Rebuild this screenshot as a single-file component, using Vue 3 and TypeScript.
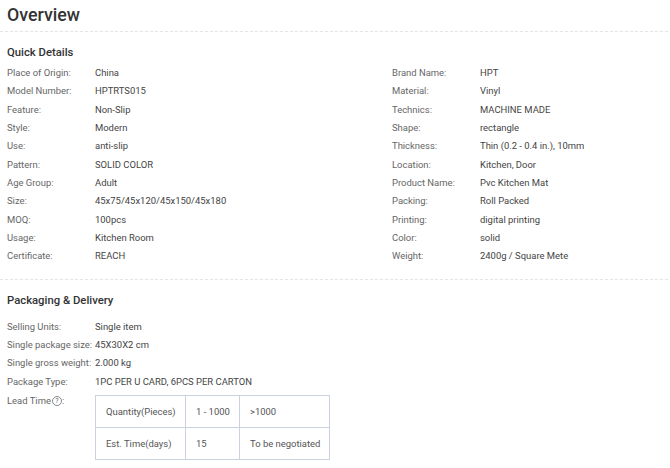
<script setup lang="ts">
const left: [string, string][] = [
  ['Place of Origin:', 'China'],
  ['Model Number:', 'HPTRTS015'],
  ['Feature:', 'Non-Slip'],
  ['Style:', 'Modern'],
  ['Use:', 'anti-slip'],
  ['Pattern:', 'SOLID COLOR'],
  ['Age Group:', 'Adult'],
  ['Size:', '45x75/45x120/45x150/45x180'],
  ['MOQ:', '100pcs'],
  ['Usage:', 'Kitchen Room'],
  ['Certificate:', 'REACH'],
]
const right: [string, string][] = [
  ['Brand Name:', 'HPT'],
  ['Material:', 'Vinyl'],
  ['Technics:', 'MACHINE MADE'],
  ['Shape:', 'rectangle'],
  ['Thickness:', 'Thin (0.2 - 0.4 in.), 10mm'],
  ['Location:', 'Kitchen, Door'],
  ['Product Name:', 'Pvc Kitchen Mat'],
  ['Packing:', 'Roll Packed'],
  ['Printing:', 'digital printing'],
  ['Color:', 'solid'],
  ['Weight:', '2400g / Square Mete'],
]
const packaging: [string, string][] = [
  ['Selling Units:', 'Single item'],
  ['Single package size:', '45X30X2 cm'],
  ['Single gross weight:', '2.000 kg'],
  ['Package Type:', '1PC PER U CARD, 6PCS PER CARTON'],
]
</script>

<template>
  <main class="page">
    <h1 class="title">Overview</h1>
    <section class="quick">
      <h2 class="heading">Quick Details</h2>
      <div class="columns">
        <div class="col">
          <div v-for="r in left" :key="r[0]" class="row">
            <span class="label">{{ r[0] }}</span><span class="value">{{ r[1] }}</span>
          </div>
        </div>
        <div class="col">
          <div v-for="r in right" :key="r[0]" class="row">
            <span class="label">{{ r[0] }}</span><span class="value">{{ r[1] }}</span>
          </div>
        </div>
      </div>
    </section>
    <section class="packaging">
      <h2 class="heading pk">Packaging &amp; Delivery</h2>
      <div v-for="r in packaging" :key="r[0]" class="row">
        <span class="label">{{ r[0] }}</span><span class="value">{{ r[1] }}</span>
      </div>
      <div class="lead">
        <span class="label lead-label">Lead Time<span class="help">?</span>:</span>
        <table class="times">
          <tbody>
            <tr><td class="c1">Quantity(Pieces)</td><td class="c2">1 - 1000</td><td class="c3">&gt;1000</td></tr>
            <tr><td class="c1">Est. Time(days)</td><td class="c2">15</td><td class="c3">To be negotiated</td></tr>
          </tbody>
        </table>
      </div>
    </section>
  </main>
</template>

<style scoped>
.page {
  width: 670px;
  height: 468px;
  overflow: hidden;
  box-sizing: border-box;
  background: #fff;
  font-family: Roboto, "Liberation Sans", sans-serif;
  font-size: 9.45px;
  color: #333;
}
.title {
  margin: 0 2px 0 0;
  padding: 4px 0 5px 7px;
  height: 22px;
  line-height: 22px;
  font-size: 17.8px;
  font-weight: 500;
  color: #333;
  border-bottom: 1px dashed #e5e5e5;
}
.quick {
  padding: 0 0 13px 7px;
  margin-right: 2px;
  border-bottom: 1px dashed #e5e5e5;
}
.heading {
  margin: 0;
  padding-top: 14px;
  height: 14px;
  line-height: 14px;
  font-size: 11.3px;
  font-weight: 500;
  color: #333;
}
.columns {
  display: flex;
  margin-top: 4px;
}
.col {
  flex: none;
  width: 385px;
}
.row {
  display: flex;
  height: 18.33px;
  line-height: 18.33px;
  white-space: nowrap;
}
.label {
  width: 88px;
  flex: none;
  color: #666;
}
.value {
  color: #444;
}
.packaging {
  padding-left: 7px;
}
.heading.pk {
  padding-top: 14px;
  margin-bottom: 10px;
}
.lead {
  display: flex;
}
.lead-label {
  display: flex;
  align-items: center;
  height: 20px;
  line-height: 20px;
}
.help {
  box-sizing: border-box;
  width: 10px;
  height: 10px;
  margin-left: 1px;
  border: 1px solid #888;
  border-radius: 50%;
  font-size: 7px;
  line-height: 8px;
  text-align: center;
  color: #666;
}
.times {
  border-collapse: collapse;
  margin-top: 4px;
  table-layout: fixed;
  width: 235px;
}
.times td {
  box-sizing: border-box;
  border: 1px solid #c9d2de;
  height: 32px;
  padding: 0 0 0 10px;
  color: #555;
  white-space: nowrap;
}
.c1 { width: 90px; }
.c2 { width: 54px; }
.c3 { width: 90px; }
</style>
